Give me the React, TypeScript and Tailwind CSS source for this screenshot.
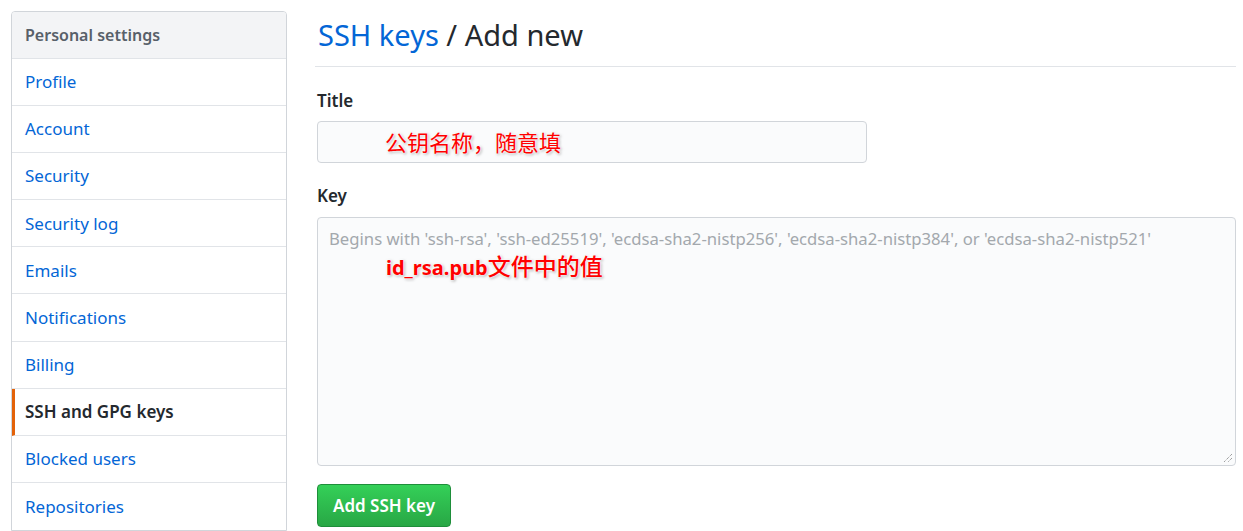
import React from "react";

const items = [
  "Profile",
  "Account",
  "Security",
  "Security log",
  "Emails",
  "Notifications",
  "Billing",
  "SSH and GPG keys",
  "Blocked users",
  "Repositories",
];

const glow =
  "0 0 2px #fff, 0 0 3px #fff, 0 0 4px #fff, 1px 1px 3px #777";

export default function App() {
  return (
    <div
      className="w-[1243px] h-[531px] overflow-hidden bg-white flex"
      style={{ fontFamily: '"Noto Sans", "Noto Sans CJK SC", sans-serif' }}
    >
      <div className="pl-[11px] pt-[11px] w-[298px] shrink-0">
        <div className="w-[276px] border border-[#d1d5da] rounded-t-[4px] overflow-hidden">
          <div className="h-[47px] bg-[#f3f4f6] border-b border-[#e1e4e8] flex items-center pl-[13px] text-[16px] font-semibold text-[#586069]">
            Personal settings
          </div>
          {items.map((it, i) => {
            const active = it === "SSH and GPG keys";
            return (
              <div
                key={it}
                className={`h-[47.1px] flex items-center text-[17px] ${
                  i < items.length - 1 ? "border-b border-[#e1e4e8]" : ""
                } ${
                  active
                    ? "text-[#24292e] font-semibold border-l-[3px] border-l-[#e36209] pl-[10px]"
                    : "text-[#0366d6] pl-[13px]"
                }`}
              >
                {it}
              </div>
            );
          })}
        </div>
      </div>
      <div className="flex-1 pt-[14px] pr-[7px] pl-[19px]">
        <div className="border-b border-[#e1e4e8] pb-[10px] h-[53px] flex items-center text-[29px] text-[#24292e] pl-[1px] -ml-[2px]">
          <span className="text-[#0366d6] pl-[2px]">SSH keys</span>
          <span>&nbsp;/ Add new</span>
        </div>
        <div className="mt-[22px] text-[17px] font-semibold text-[#24292e] h-[24px] flex items-center">
          Title
        </div>
        <div className="mt-[8px] w-[550px] h-[42px] border border-[#d1d5da] rounded-[4px] bg-[#fafbfc] flex items-center pl-[67px]">
          <span className="text-[22px] text-[#ff0000]" style={{ textShadow: glow }}>
            公钥名称，随意填
          </span>
        </div>
        <div className="mt-[21px] text-[17px] font-semibold text-[#24292e] h-[24px] flex items-center">
          Key
        </div>
        <div className="mt-[9px] w-[919px] h-[249px] border border-[#d1d5da] rounded-[4px] bg-[#fafbfc] relative pl-[11px] pt-[9px]">
          <div className="text-[16.7px] text-[#a3a8ad] leading-[24px]">
            Begins with 'ssh-rsa', 'ssh-ed25519', 'ecdsa-sha2-nistp256', 'ecdsa-sha2-nistp384', or 'ecdsa-sha2-nistp521'
          </div>
          <div
            className="ml-[57px] mt-[2px] text-[20px] font-bold text-[#ff0000] leading-[26px]"
            style={{ textShadow: glow }}
          >
            id_rsa.pub<span className="font-medium text-[23px]">文件中的值</span>
          </div>
          <svg
            className="absolute right-[2px] bottom-[2px]"
            width="10"
            height="10"
            viewBox="0 0 10 10"
          >
            <line x1="9" y1="1" x2="1" y2="9" stroke="#777" strokeWidth="1" strokeDasharray="1 1" />
            <line x1="9" y1="5" x2="5" y2="9" stroke="#777" strokeWidth="1" strokeDasharray="1 1" />
          </svg>
        </div>
        <div className="mt-[18px]">
          <button className="w-[134px] h-[43px] rounded-[4px] border border-[#1e8e3a] bg-gradient-to-b from-[#34d058] to-[#28a745] text-white text-[17px] font-semibold">
            Add SSH key
          </button>
        </div>
      </div>
    </div>
  );
}
